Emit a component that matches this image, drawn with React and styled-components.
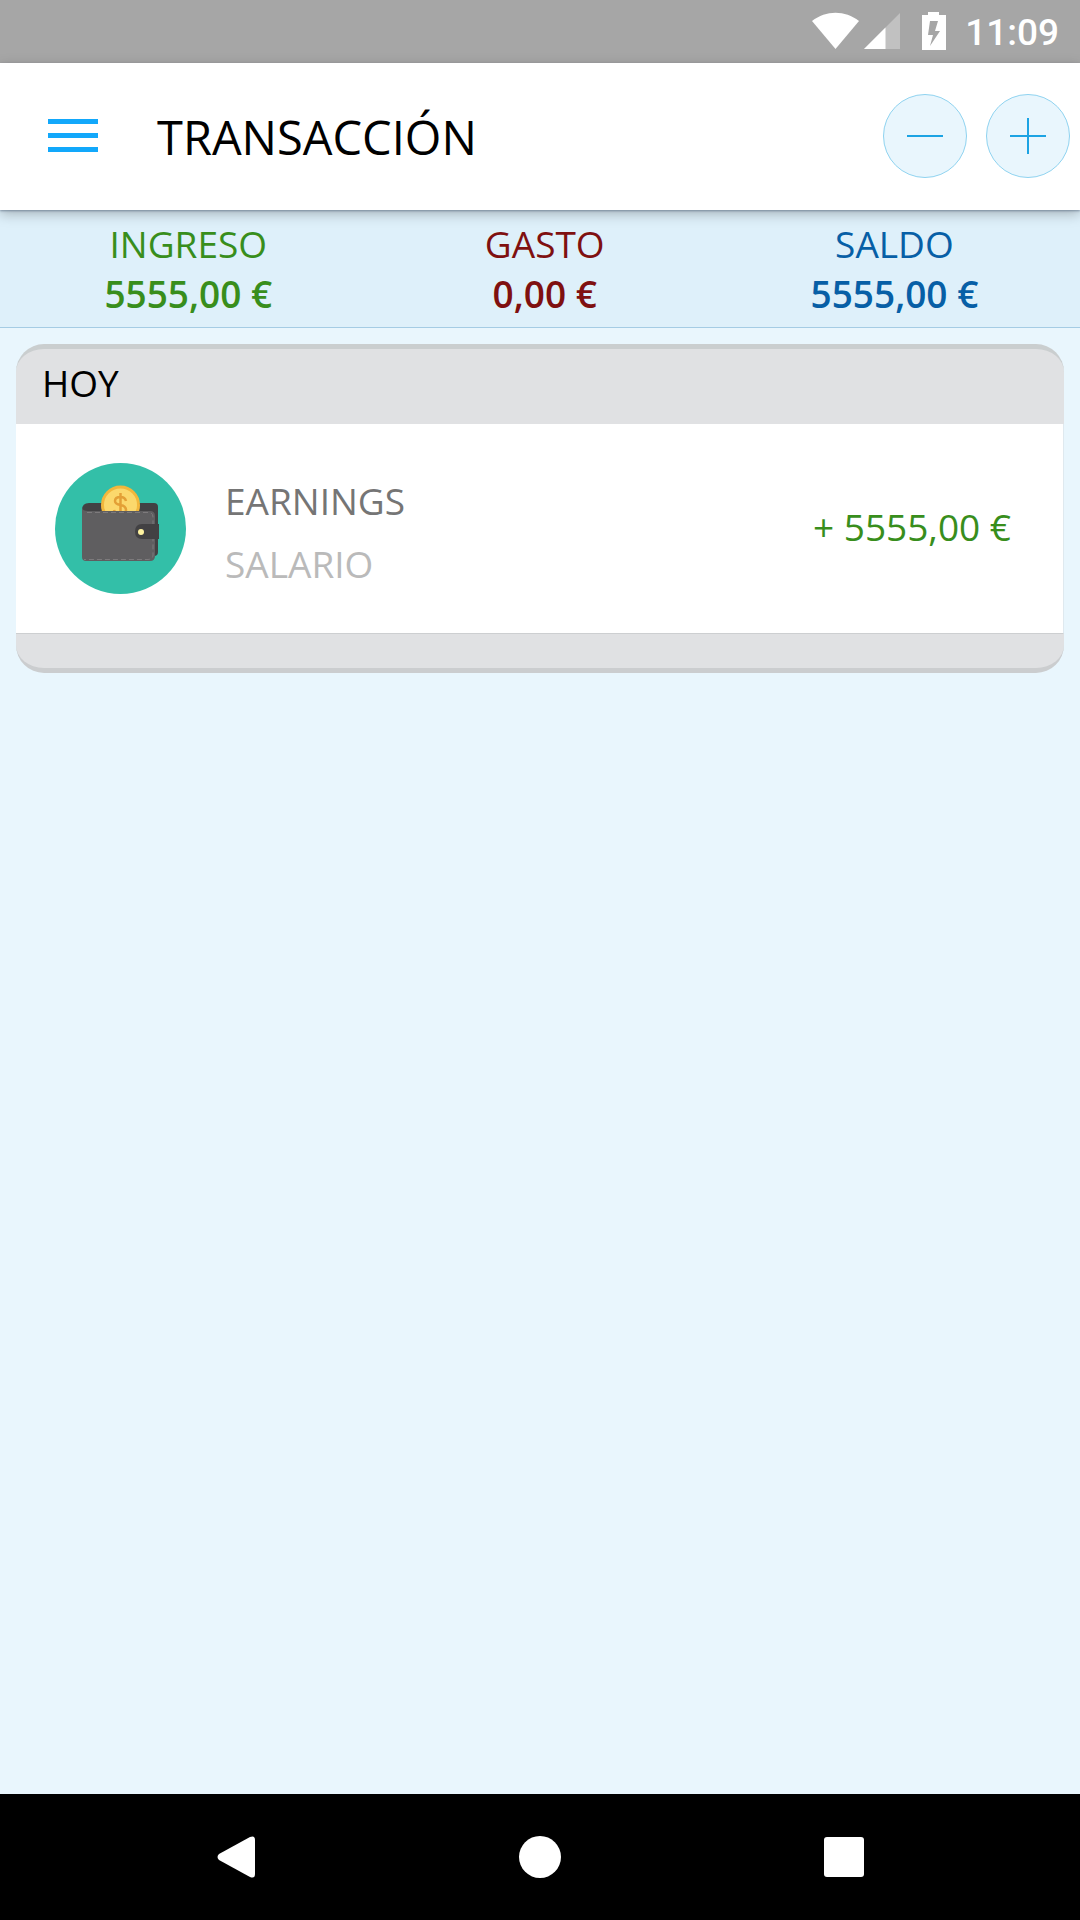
import React from 'react';
import styled, { createGlobalStyle } from 'styled-components';

const GlobalStyle = createGlobalStyle`
  *, *::before, *::after {
    box-sizing: border-box;
  }

  body {
    margin: 0;
    background: #e9f6fd;
    font-family: 'Open Sans', 'Noto Sans', sans-serif;
    font-size: 37px;
    line-height: 48px;
    color: #000000;
  }

  h1, h2, p, ul, dl, dd {
    margin: 0;
    padding: 0;
  }

  svg {
    display: block;
  }
`;

const Screen = styled.div`
  display: flex;
  flex-direction: column;
  min-height: 100vh;
`;

const StatusBar = styled.div`
  display: flex;
  align-items: center;
  justify-content: flex-end;
  height: 63px;
  padding: 0 21px 1px 0;
  background: #a6a6a6;
`;

const Clock = styled.time`
  margin-left: 17px;
  padding-top: 4px;
  font-family: Roboto, sans-serif;
  font-weight: 500;
  color: #ffffff;
`;

const Header = styled.header`
  position: relative;
  z-index: 1;
  display: flex;
  align-items: center;
  height: 147px;
  padding: 0 10px 1px 48px;
  background: #ffffff;
  box-shadow: 0 1px 2px rgba(60, 80, 110, 0.5), 0 4px 12px rgba(0, 0, 0, 0.25);
`;

const MenuButton = styled.button`
  padding: 0;
  border: none;
  background: none;
  cursor: pointer;
`;

const Title = styled.h1`
  flex: 1;
  margin-left: 59px;
  padding-top: 2px;
  font-size: 47px;
  font-weight: 400;
  line-height: 64px;
`;

const Actions = styled.div`
  display: flex;
  gap: 19px;
`;

const RoundButton = styled.button`
  display: flex;
  align-items: center;
  justify-content: center;
  width: 84px;
  height: 84px;
  padding: 0;
  border: 1px solid #8fd3f0;
  border-radius: 50%;
  background: #e9f6fd;
  cursor: pointer;
`;

const Summary = styled.dl`
  display: grid;
  grid-template-columns: 28fr 25fr 27fr;
  padding: 9px 4px 9px 0;
  border-bottom: 1px solid #a5cce4;
  background: #def0fa;
`;

const SummaryItem = styled.div`
  text-align: center;
  line-height: 50px;
  color: ${(props) => props.$color};
`;

const SummaryValue = styled.dd`
  line-height: 49px;
  font-weight: 600;
`;

const Content = styled.main`
  flex: 1;
  padding: 16px;
`;

const Card = styled.section`
  overflow: hidden;
  border-top: 5px solid #cacecf;
  border-bottom: 5px solid #cbcdcf;
  border-radius: 28px;
  background: #e0e1e3;
`;

const CardTitle = styled.h2`
  padding: 10px 26px 17px;
  font-size: 37px;
  font-weight: 400;
`;

const List = styled.ul`
  list-style: none;
  border-right: 1px solid #dfe9ef;
  border-bottom: 1px solid #cdcfd1;
  background: #ffffff;
`;

const Row = styled.li`
  display: flex;
  align-items: center;
  min-height: 209px;
  padding: 0 52px 0 39px;
`;

const RowText = styled.div`
  flex: 1;
  margin-left: 39px;
  padding-top: 7px;
  line-height: 63px;
`;

const Category = styled.p`
  color: #757575;
`;

const Note = styled.p`
  color: #bababa;
`;

const Amount = styled.p`
  padding-bottom: 4px;
  color: #388e1c;
`;

const CardFooter = styled.div`
  height: 34px;
`;

const NavBar = styled.nav`
  display: grid;
  grid-template-columns: repeat(3, 1fr);
  height: 126px;
  padding: 0 84px;
  background: #000000;
`;

const NavButton = styled.button`
  display: flex;
  align-items: center;
  justify-content: center;
  padding: 0;
  border: none;
  background: none;
  cursor: pointer;
`;

const totals = [
  { label: 'INGRESO', value: '5555,00 €', color: '#388e1c' },
  { label: 'GASTO', value: '0,00 €', color: '#7f1010' },
  { label: 'SALDO', value: '5555,00 €', color: '#075fa6' },
];

const transactions = [
  { category: 'EARNINGS', note: 'SALARIO', amount: '+ 5555,00 €' },
];

function StatusIcons() {
  return (
    <svg width="136" height="40" viewBox="0 0 136 40" fill="#ffffff" aria-hidden="true">
      <path d="M0 10C14 -1 33 -1 47 10L23.500 38Z" />
      <path d="M88 2V38H52Z" fillOpacity="0.3" />
      <path d="M73.500 16.500V38H52Z" />
      <path
        fillRule="evenodd"
        d="M116 1H127V4H134V39H110V4H116ZM118 10L116 24H121L118 35L128 20H123L126 10Z"
      />
    </svg>
  );
}

function WalletIcon() {
  return (
    <svg width="131" height="131" viewBox="0 0 131 131" aria-hidden="true">
      <circle cx="65.500" cy="65.500" r="65.500" fill="#33bfa8" />
      <path d="M27 47Q27 40 34 40H99Q103 40 103 44V89Q103 93 99 93H40L27 60Z" fill="#424143" />
      <circle cx="65.500" cy="42" r="18" fill="#fbd86c" stroke="#f2b73c" strokeWidth="3" />
      <path
        d="M71 38Q70 34 65.500 34Q60 34 60 38Q60 41 65.500 42Q71 43 71 47Q71 51 65.500 51Q60 51 59 47M65.500 30V54"
        fill="none"
        stroke="#e3a036"
        strokeWidth="2.500"
      />
      <path d="M27 44Q27 48 33 48H95Q100 48 100 53V93Q100 98 95 98H31Q27 98 27 94Z" fill="#5f5e60" />
      <path
        d="M32 49.500H94Q98 50 98 54V92Q98 96 93 96.500H29"
        fill="none"
        stroke="#7d7a7c"
        strokeWidth="1"
        strokeDasharray="5 3"
      />
      <path d="M87 61H104V76H87Q80 76 80 68.500Q80 61 87 61Z" fill="#424143" />
      <circle cx="86" cy="69" r="3" fill="#fff3a0" />
    </svg>
  );
}

function App() {
  return (
    <>
      <GlobalStyle />
      <Screen>
        <StatusBar>
          <StatusIcons />
          <Clock>11:09</Clock>
        </StatusBar>

        <Header>
          <MenuButton aria-label="Menú">
            <svg width="50" height="34" viewBox="0 0 50 34" fill="#12a8fb">
              <path d="M0 0H50V5H0ZM0 14H50V19H0ZM0 28H50V33H0Z" />
            </svg>
          </MenuButton>
          <Title>TRANSACCIÓN</Title>
          <Actions>
            <RoundButton aria-label="Añadir gasto">
              <svg width="36" height="36" viewBox="0 0 36 36" fill="#1ca3e3">
                <path d="M0 17H36V19H0Z" />
              </svg>
            </RoundButton>
            <RoundButton aria-label="Añadir ingreso">
              <svg width="36" height="36" viewBox="0 0 36 36" fill="#1ca3e3">
                <path d="M0 17H17V0H19V17H36V19H19V36H17V19H0Z" />
              </svg>
            </RoundButton>
          </Actions>
        </Header>

        <Summary>
          {totals.map((total) => (
            <SummaryItem key={total.label} $color={total.color}>
              <dt>{total.label}</dt>
              <SummaryValue>{total.value}</SummaryValue>
            </SummaryItem>
          ))}
        </Summary>

        <Content>
          <Card>
            <CardTitle>HOY</CardTitle>
            <List>
              {transactions.map((item) => (
                <Row key={item.category}>
                  <WalletIcon />
                  <RowText>
                    <Category>{item.category}</Category>
                    <Note>{item.note}</Note>
                  </RowText>
                  <Amount>{item.amount}</Amount>
                </Row>
              ))}
            </List>
            <CardFooter />
          </Card>
        </Content>

        <NavBar>
          <NavButton aria-label="Atrás">
            <svg width="38" height="42" viewBox="0 0 38 42" fill="#ffffff">
              <path d="M2 18L33 1Q38 -1 38 4V38Q38 43 33 41L2 24Q-1 21 2 18Z" />
            </svg>
          </NavButton>
          <NavButton aria-label="Inicio">
            <svg width="42" height="42" viewBox="0 0 42 42" fill="#ffffff">
              <circle cx="21" cy="21" r="21" />
            </svg>
          </NavButton>
          <NavButton aria-label="Recientes">
            <svg width="40" height="40" viewBox="0 0 40 40" fill="#ffffff">
              <rect width="40" height="40" rx="3" />
            </svg>
          </NavButton>
        </NavBar>
      </Screen>
    </>
  );
}

export default App;
